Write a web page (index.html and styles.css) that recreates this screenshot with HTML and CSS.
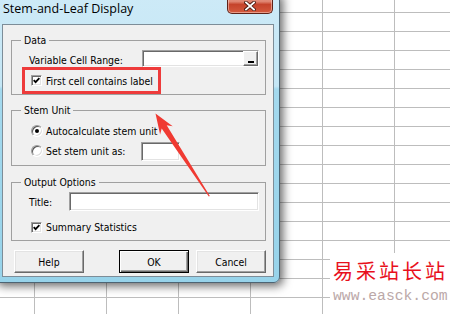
FILE: index.html
```html
<!DOCTYPE html>
<html lang="en">
<head>
  <meta charset="UTF-8">
  <title>Stem-and-Leaf Display</title>
  <link rel="stylesheet" href="styles.css">
</head>
<body>
  <div class="window">
    <div class="titlebar">
      <span class="title">Stem-and-Leaf Display</span>
      <span class="close">
        <svg width="12" height="10" viewBox="0 0 12 10">
          <path d="M2 1.5 L10 8.5 M10 1.5 L2 8.5" stroke="#4a1a12" stroke-width="3.6" stroke-linecap="square"/>
          <path d="M2 1.5 L10 8.5 M10 1.5 L2 8.5" stroke="#fff" stroke-width="1.8" stroke-linecap="square"/>
        </svg>
      </span>
    </div>

    <div class="client">
      <fieldset class="group">
        <legend>Data</legend>
        <div class="row range-row">
          <span>Variable Cell Range:</span>
          <span class="field range"><span class="pick"><i></i></span></span>
        </div>
        <label class="row check marked">
          <span class="box"><svg width="7" height="7" viewBox="0 0 7 7"><polyline points="0.7,3.1 2.6,5.1 6.4,1.1" fill="none" stroke="#000" stroke-width="1.8"/></svg></span>
          First cell contains label
        </label>
      </fieldset>

      <fieldset class="group stem">
        <legend>Stem Unit</legend>
        <div class="row opt first"><span class="radio on"></span>Autocalculate stem unit</div>
        <div class="row opt"><span class="radio"></span><span class="opt-label">Set stem unit as:</span><span class="field unit"></span></div>
      </fieldset>

      <fieldset class="group output">
        <legend>Output Options</legend>
        <div class="row title-row"><span class="title-label">Title:</span><span class="field title-field"></span></div>
        <div class="row opt summary">
          <span class="box"><svg width="7" height="7" viewBox="0 0 7 7"><polyline points="0.7,3.1 2.6,5.1 6.4,1.1" fill="none" stroke="#000" stroke-width="1.8"/></svg></span>
          Summary Statistics
        </div>
      </fieldset>

      <div class="buttons">
        <span class="btn">Help</span>
        <span class="btn default">OK</span>
        <span class="btn">Cancel</span>
      </div>
    </div>
  </div>

  <div class="watermark">
    <div class="wm-cn">易采站长站</div>
    <div class="wm-url">www.easck.com</div>
  </div>

  <!-- annotation arrow -->
  <svg class="arrow" width="450" height="314" viewBox="0 0 450 314">
    <polygon points="155.5,113.5 172.7,126.2 166.7,125.3 209.8,195.9 208.8,196.5 161.7,128.5 160.1,134.4" fill="#f03a32"/>
  </svg>
</body>
</html>
```

FILE: styles.css
```css
body {
  margin: 0; width: 450px; height: 314px; overflow: hidden; position: relative;
  background-color: #fff;
  background-image: linear-gradient(to right, #bdbdbd 1px, transparent 1px), linear-gradient(#bdbdbd 1px, transparent 1px);
  background-size: 72px 19px;
  background-position: 34px 12px;
}

.window {
  position: absolute; left: -6px; top: -7px;
  width: 286px; height: 290px; box-sizing: border-box;
  display: flex; flex-direction: column;
  padding: 0 5px 5px 7px;
  border: 1px solid #4d6473; border-radius: 0 0 6px 6px;
  background: linear-gradient(180deg, #cdeaf7 0, #c4e6f5 32%, #a4d9ee 33%, #97d3ea 100%);
  box-shadow: 3px 3px 10px rgba(0,0,0,.6);
  font-family: "DejaVu Sans Condensed", "Liberation Sans", sans-serif;
  font-size: 10.4px; color: #000;
}

.titlebar { height: 30px; flex: none; display: flex; align-items: flex-start; }
.title {
  font-family: "Open Sans", "Noto Sans", sans-serif; font-size: 12.5px; line-height: 16px;
  margin: 7px 0 0 1px; color: #000;
}
.close {
  margin: 0 1px 0 auto; width: 46px; height: 20px; box-sizing: border-box;
  display: flex; align-items: center; justify-content: center;
  border: 1px solid #5e2218; border-top: none; border-radius: 0 0 5px 5px;
  background: linear-gradient(#eaa89a, #df8470 40%, #c5432b 55%, #d45a3e);
  box-shadow: inset 0 0 0 1px rgba(255,220,210,.5);
}
.close svg { margin-top: 5px; }

.client {
  flex: none; height: 253px; box-sizing: border-box;
  border: 1px solid #7d8d98; background: #f0f0f0;
}

.group { margin: 9px 7px 0 8px; padding: 0 0 3px; border: 1px solid #a0a0a0; min-width: 0; }
.group legend { margin-left: 9px; padding: 0 3px; line-height: 13px; }
.stem { padding-bottom: 4px; }
.output { margin-top: 10px; }

.row { display: flex; align-items: center; }
.range-row { height: 17px; margin-top: 3px; padding-left: 17px; }
.range-row > span:first-child { padding-top: 2px; }

.field {
  box-sizing: border-box; background: #fff; display: flex; justify-content: flex-end; align-items: center;
  border: 1px solid; border-color: #a0a0a0 #fff #fff #a0a0a0;
  box-shadow: inset 1px 1px 0 #696969, inset -1px -1px 0 #e3e3e3;
}
.range { width: 117px; height: 17px; margin: 0 6px 0 auto; }
.pick {
  width: 15px; height: 15px; box-sizing: border-box; background: #f0f0f0;
  display: flex; align-items: flex-end; justify-content: center;
  border: 1px solid; border-color: #fff #696969 #696969 #fff;
  box-shadow: inset -1px -1px 0 #a0a0a0;
}
.pick i { display: block; width: 6px; height: 2px; background: #000; margin-bottom: 2px; }

.check.marked {
  width: 133px; height: 21px; box-sizing: border-box;
  margin: 3px 0 0 13px; padding-left: 6px;
  outline: 3px solid #ee3b3b;
}
.box {
  width: 11px; height: 11px; box-sizing: border-box; margin-right: 4px; flex: none;
  display: flex; align-items: center; justify-content: center; background: #fff;
  border: 1px solid; border-color: #a0a0a0 #fff #fff #a0a0a0;
  box-shadow: inset 1px 1px 0 #696969, inset -1px -1px 0 #e3e3e3;
}

.opt { height: 20px; padding-left: 19px; }
.stem .first { margin-top: 4px; }
.radio {
  width: 12px; height: 12px; box-sizing: border-box; margin-right: 3px; flex: none;
  border-radius: 50%; background: #fff;
  border: 1px solid; border-color: #9a9a9a #fff #fff #9a9a9a;
  box-shadow: inset 1px 1px 0 #555, inset -1px -1px 0 #dcdcdc;
  display: flex; align-items: center; justify-content: center;
}
.radio.on::after { content: ""; width: 4px; height: 4px; border-radius: 50%; background: #000; }
.opt-label { width: 95px; }
.unit { width: 39px; height: 19px; }

.title-row { height: 19px; margin-top: 3px; padding-left: 17px; }
.title-label { width: 40px; }
.title-field { width: 190px; height: 19px; }
.summary { margin-top: 6px; }

.buttons { display: flex; gap: 7px; margin-top: 9px; padding: 0 7px 0 11px; }
.btn {
  width: 70px; height: 23px; box-sizing: border-box;
  display: flex; align-items: center; justify-content: center; background: #f0f0f0;
  border: 1px solid; border-color: #fff #696969 #696969 #fff;
  box-shadow: inset -1px -1px 0 #a0a0a0, inset 1px 1px 0 #e3e3e3;
}
.btn.default {
  margin-left: auto; border-color: #000;
  box-shadow: inset 1px 1px 0 #fff, inset -1px -1px 0 #696969, inset -2px -2px 0 #a0a0a0;
}

.watermark {
  position: absolute; left: 330px; top: 253px; width: 120px; height: 61px; background: #fff;
}
.wm-cn {
  font-family: "Noto Sans CJK SC", sans-serif; font-size: 20px; line-height: 22px;
  letter-spacing: 3px; color: #e8101c; margin: 7px 0 0 3px; white-space: nowrap;
}
.wm-url {
  font-family: "Liberation Mono", monospace; font-size: 14.7px; line-height: 14px;
  color: #bba8a8; margin: 7px 0 0 3px; white-space: nowrap;
}

.arrow { position: absolute; left: 0; top: 0; pointer-events: none; }
```
